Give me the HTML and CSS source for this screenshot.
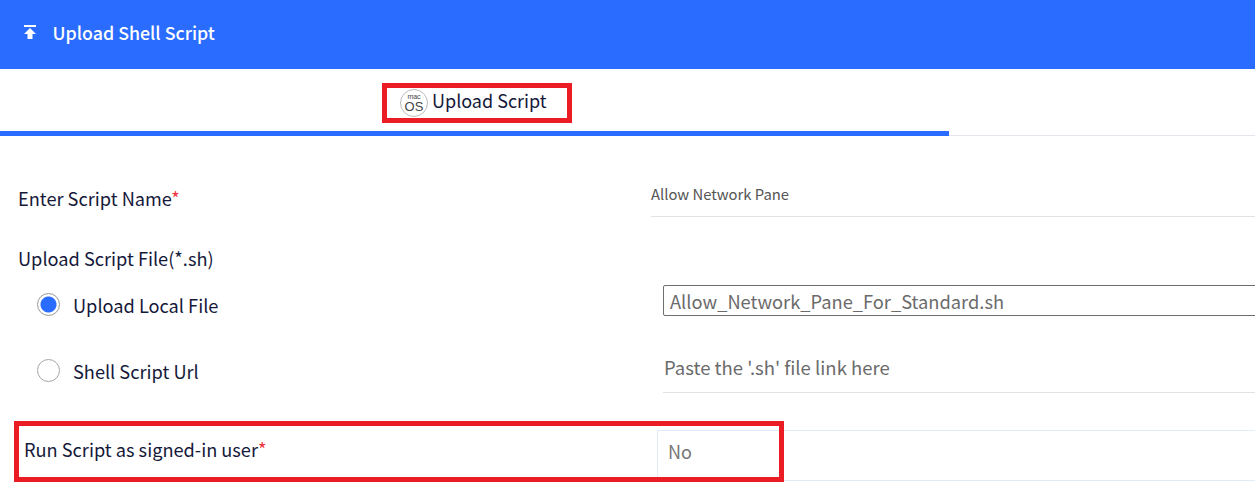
FILE: index.html
```html
<!DOCTYPE html>
<html lang="en">
<head>
    <meta charset="UTF-8">
    <title>Upload Shell Script</title>
    <link rel="stylesheet" href="styles.css">
</head>
<body>
    <div class="header">
        <svg class="header-icon" width="14" height="14" viewBox="0 0 14 14">
            <rect x="1" y="0" width="12" height="2" fill="#fff"/>
            <path d="M7 3 L13 9 H9.5 V14 H4.5 V9 H1 Z" fill="#fff"/>
        </svg>
        <span class="header-title">Upload Shell Script</span>
    </div>

    <div class="tabs">
        <div class="tab">
            <span class="os-badge"><span class="os-mac">mac</span><span class="os-os">OS</span></span>
            <span>Upload Script</span>
        </div>
    </div>

    <div class="form">
        <div class="row row-name">
            <div class="label">Enter Script Name<span class="req">*</span></div>
            <div class="value-line">Allow Network Pane</div>
        </div>

        <div class="label row-upload">Upload Script File(*.sh)</div>

        <div class="row row-local">
            <div class="radio-wrap">
                <span class="radio radio-on"></span>
                <span class="label">Upload Local File</span>
            </div>
            <div class="file-box">Allow_Network_Pane_For_Standard.sh</div>
        </div>

        <div class="row row-url">
            <div class="radio-wrap">
                <span class="radio"></span>
                <span class="label">Shell Script Url</span>
            </div>
            <div class="url-line">Paste the '.sh' file link here</div>
        </div>

        <div class="row row-run">
            <div class="label label-run">Run Script as signed-in user<span class="req">*</span></div>
            <div class="select-box">No</div>
        </div>
    </div>

    <div class="mark mark-tab"></div>
    <div class="mark mark-run"></div>
</body>
</html>
```

FILE: styles.css
```css
html, body {
    margin: 0;
    padding: 0;
}
body {
    font-family: "Noto Sans CJK JP", "Noto Sans", sans-serif;
    background: #fff;
    color: #15193a;
    height: 497px;
    overflow: hidden;
    position: relative;
}
.header {
    height: 69px;
    background: #2a6cff;
    display: flex;
    align-items: center;
    padding-left: 23px;
    box-sizing: border-box;
}
.header-icon {
    margin-right: 16px;
    margin-top: -5px;
}
.header-title {
    color: #fff;
    font-size: 17.8px;
    font-weight: 500;
    margin-top: -6px;
    margin-left: -0.5px;
}
.tabs {
    height: 67px;
    border-bottom: 1px solid #e3e6ec;
    box-sizing: border-box;
    position: relative;
}
.tabs::after {
    content: "";
    position: absolute;
    left: 0;
    bottom: -1px;
    width: 949px;
    height: 5px;
    background: #2a6cff;
}
.tab {
    display: flex;
    align-items: flex-start;
    padding: 18px 0 0 400px;
    font-size: 18px;
    line-height: 27px;
    gap: 4px;
}
.os-badge {
    width: 28px;
    height: 28px;
    border: 1px solid #bbb;
    border-radius: 50%;
    box-sizing: border-box;
    display: flex;
    flex-direction: column;
    align-items: center;
    justify-content: center;
    color: #444;
    margin-top: 2px;
    font-family: "Liberation Sans", Arial, sans-serif;
}
.os-mac {
    font-size: 7px;
    height: 8px;
    line-height: 8px;
}
.os-os {
    font-size: 13px;
    height: 14px;
    line-height: 14px;
    margin-top: -1px;
}
.form {
    display: flex;
    flex-direction: column;
}
.row {
    display: flex;
}
.label {
    font-size: 18.2px;
    line-height: 24px;
}
.req {
    color: #f0303c;
}
.row-name {
    margin-top: 40px;
    height: 41px;
}
.row-name .label {
    width: 651px;
    padding: 10px 0 0 18px;
    box-sizing: border-box;
    flex: none;
}
.value-line {
    flex: 1;
    font-size: 14.8px;
    color: #555;
    line-height: 20px;
    padding-top: 8px;
    border-bottom: 1px solid #e2e2e2;
    box-sizing: border-box;
}
.row-upload {
    margin-top: 29px;
    padding-left: 18px;
}
.row-local {
    margin-top: 15px;
    height: 31px;
}
.radio-wrap {
    width: 663px;
    flex: none;
    display: flex;
    align-items: center;
    padding-left: 37px;
    box-sizing: border-box;
    gap: 13px;
}
.radio-wrap .label {
    margin-top: -2px;
}
.row-local .radio-wrap {
    padding-top: 10px;
    height: 31px;
}
.radio {
    width: 23px;
    height: 23px;
    border: 1px solid #a5a5a5;
    border-radius: 50%;
    box-sizing: border-box;
    flex: none;
    position: relative;
    top: -1px;
    background: #fff;
}
.radio-on {
    border-color: #999;
    background: radial-gradient(circle, #2a6cff 0 7.5px, #fff 8.5px);
}
.file-box {
    flex: 1;
    margin-right: -10px;
    height: 31px;
    border: 1px solid #6e6e6e;
    box-sizing: border-box;
    font-size: 18.3px;
    line-height: 30px;
    padding-left: 6px;
    color: #6b6b6b;
    border-radius: 2px 0 0 2px;
}
.row-url {
    margin-top: 35px;
    height: 42px;
}
.row-url .radio-wrap {
    padding-top: 0;
    height: 41px;
}
.url-line {
    flex: 1;
    font-size: 18.5px;
    line-height: 27px;
    padding: 3px 0 0 1px;
    color: #6b6b6b;
    border-bottom: 1px solid #e2e2e2;
    box-sizing: border-box;
}
.row-run {
    margin-top: 37px;
    height: 49px;
    border-top: 1px solid #e3ebf8;
    border-bottom: 1px solid #e3ebf8;
    margin-left: 657px;
    position: relative;
}
.label-run {
    position: absolute;
    left: -633px;
    top: 6px;
    white-space: nowrap;
}
.select-box {
    width: 100px;
    border-left: 1px solid #e3ebf8;
    font-size: 18px;
    line-height: 27px;
    padding: 7px 0 0 10px;
    color: #777;
    box-sizing: border-box;
}
.mark {
    position: absolute;
    border: 5px solid #ec1c24;
    box-sizing: border-box;
}
.mark-tab {
    left: 382px;
    top: 83px;
    width: 190px;
    height: 40px;
}
.mark-run {
    left: 14px;
    top: 421px;
    width: 770px;
    height: 61px;
}
```
